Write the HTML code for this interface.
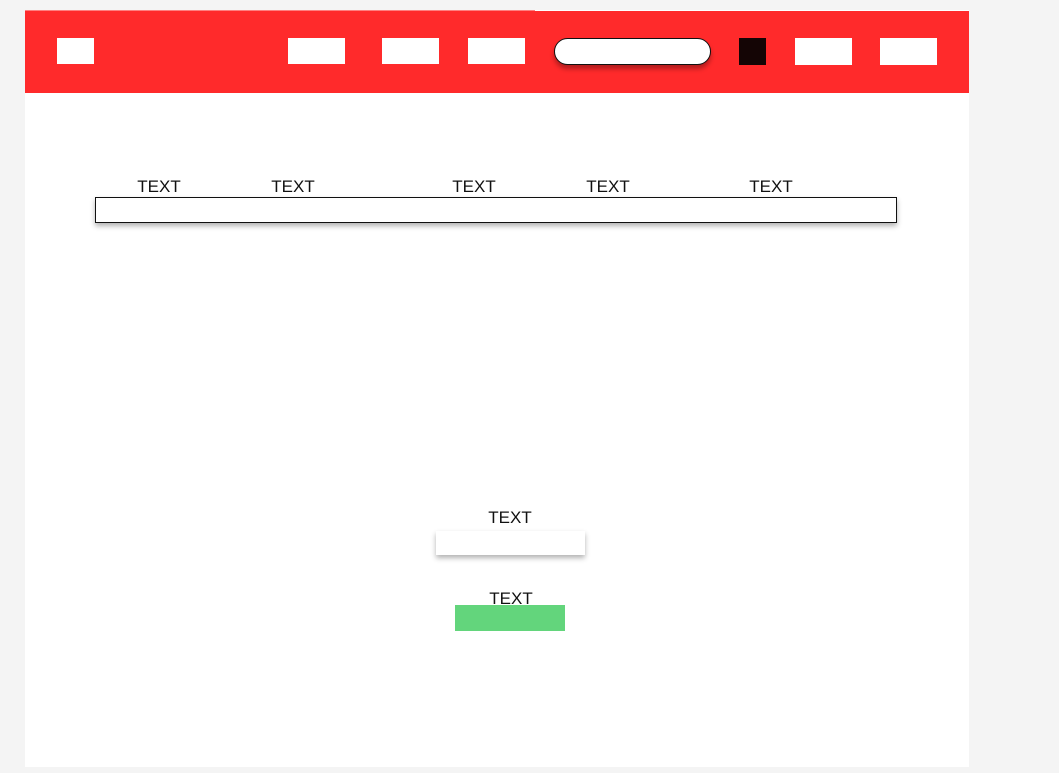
<!DOCTYPE html>
<html><head><style>
body{margin:0;width:1059px;height:773px;background:#f4f4f4;position:relative;overflow:hidden;font-family:"Liberation Sans",sans-serif;}
div{position:absolute;box-sizing:border-box;}
.w{background:#fff;}
.t{font-size:17px;color:#111;transform:translateX(-50%);white-space:nowrap;line-height:20px;}
</style></head><body>
<div class="w" style="left:25px;top:10px;width:944px;height:757px;"></div>
<div style="left:25px;top:10px;width:510px;height:1px;background:#ff8080;"></div>
<div style="left:25px;top:11px;width:944px;height:82px;background:#ff2a2b;"></div>
<div class="w" style="left:57px;top:38px;width:37px;height:26px;"></div>
<div class="w" style="left:288px;top:38px;width:57px;height:26px;"></div>
<div class="w" style="left:382px;top:38px;width:57px;height:26px;"></div>
<div class="w" style="left:468px;top:38px;width:57px;height:26px;"></div>
<div class="w" style="left:554px;top:38px;width:157px;height:27px;border:1px solid #111;border-radius:14px;box-shadow:0 4px 5px rgba(0,0,0,.3);"></div>
<div style="left:739px;top:38px;width:27px;height:27px;background:#140505;"></div>
<div class="w" style="left:795px;top:38px;width:57px;height:27px;"></div>
<div class="w" style="left:880px;top:38px;width:57px;height:27px;"></div>
<div class="t" style="left:159px;top:177px;">TEXT</div>
<div class="t" style="left:293px;top:177px;">TEXT</div>
<div class="t" style="left:474px;top:177px;">TEXT</div>
<div class="t" style="left:608px;top:177px;">TEXT</div>
<div class="t" style="left:771px;top:177px;">TEXT</div>
<div class="w" style="left:95px;top:197px;width:802px;height:26px;border:1px solid #111;box-shadow:0 3px 5px rgba(0,0,0,.3);"></div>
<div class="t" style="left:510px;top:508px;">TEXT</div>
<div class="w" style="left:436px;top:531px;width:149px;height:24px;box-shadow:0 3px 5px rgba(0,0,0,.3);"></div>
<div style="left:455px;top:605px;width:110px;height:26px;background:#63d57c;"></div>
<div class="t" style="left:511px;top:589px;">TEXT</div>
</body></html>
